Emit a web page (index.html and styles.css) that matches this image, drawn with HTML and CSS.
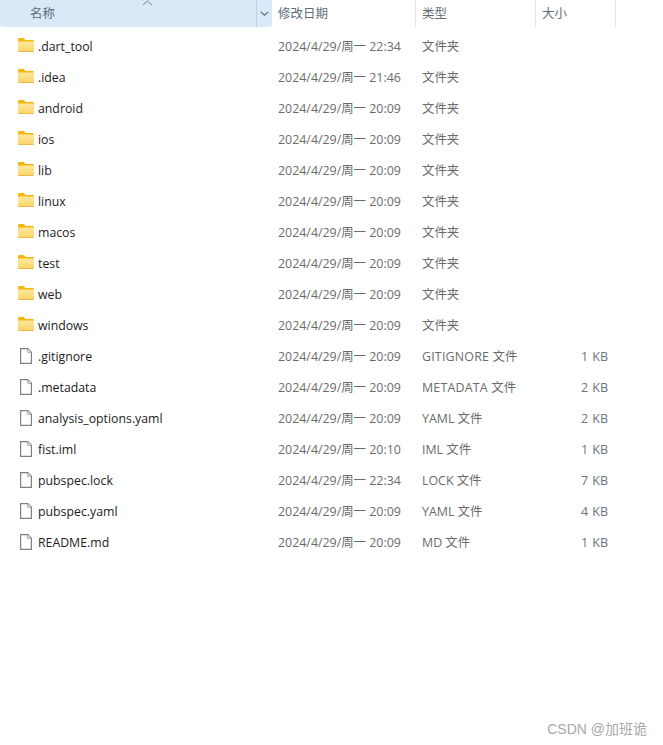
FILE: index.html
```html
<!DOCTYPE html>
<html lang="zh-CN">
<head>
  <meta charset="UTF-8">
  <title>fist</title>
  <link rel="stylesheet" href="styles.css">
</head>
<body>
  <svg class="defs" width="0" height="0">
    <defs>
      <linearGradient id="folderFront" x1="0" y1="0" x2="0" y2="1">
        <stop offset="0" stop-color="#fee89f"/>
        <stop offset="1" stop-color="#fcd56a"/>
      </linearGradient>
      <symbol id="folder" viewBox="0 0 16 14">
        <path d="M0 1.500C0 .7.6 0 1.400 0h3.800c.4 0 .7.1 1 .4L7.600 2H14.600c.8 0 1.400.6 1.400 1.400V4H0z" fill="#f6b40e"/>
        <path d="M0 3.400h16v8.900c0 .8-.6 1.400-1.400 1.400H1.400C.6 13.700 0 13.100 0 12.300z" fill="url(#folderFront)"/>
        <path d="M0 13h16v.2c0 .3-.6.5-1.400.5H1.400C.6 13.700 0 13.500 0 13.200z" fill="#e9aa2b"/>
      </symbol>
      <symbol id="file" viewBox="0 0 12 16">
        <path d="M.6.6h7.200l3.600 3.600v11.200H.6z" fill="#fff" stroke="#808080" stroke-width="1.200"/>
        <path d="M7.600 1v3.400H11" fill="#ececec" stroke="#b0b0b0"/>
      </symbol>
    </defs>
  </svg>

  <div class="list">
    <div class="head">
      <div class="head-name">
        <span class="sort-arrow"><svg width="11" height="6" viewBox="0 0 11 6"><path d="M1 5l4.500-4L10 5" fill="none" stroke="#7b8288"/></svg></span>
        <span class="head-label">名称</span>
        <span class="head-drop"><svg width="9" height="5" viewBox="0 0 9 5"><path d="M.8.8l3.700 3.400L8.200.8" fill="none" stroke="#5d6873" stroke-width="1.100"/></svg></span>
      </div>
      <div class="head-cell">修改日期</div>
      <div class="head-cell">类型</div>
      <div class="head-cell">大小</div>
    </div>

    <div class="row"><svg class="ico-folder"><use href="#folder"/></svg><span class="name">.dart_tool</span><span class="cell">2024/4/29/周一 22:34</span><span class="cell">文件夹</span><span class="size"></span></div>
    <div class="row"><svg class="ico-folder"><use href="#folder"/></svg><span class="name">.idea</span><span class="cell">2024/4/29/周一 21:46</span><span class="cell">文件夹</span><span class="size"></span></div>
    <div class="row"><svg class="ico-folder"><use href="#folder"/></svg><span class="name">android</span><span class="cell">2024/4/29/周一 20:09</span><span class="cell">文件夹</span><span class="size"></span></div>
    <div class="row"><svg class="ico-folder"><use href="#folder"/></svg><span class="name">ios</span><span class="cell">2024/4/29/周一 20:09</span><span class="cell">文件夹</span><span class="size"></span></div>
    <div class="row"><svg class="ico-folder"><use href="#folder"/></svg><span class="name">lib</span><span class="cell">2024/4/29/周一 20:09</span><span class="cell">文件夹</span><span class="size"></span></div>
    <div class="row"><svg class="ico-folder"><use href="#folder"/></svg><span class="name">linux</span><span class="cell">2024/4/29/周一 20:09</span><span class="cell">文件夹</span><span class="size"></span></div>
    <div class="row"><svg class="ico-folder"><use href="#folder"/></svg><span class="name">macos</span><span class="cell">2024/4/29/周一 20:09</span><span class="cell">文件夹</span><span class="size"></span></div>
    <div class="row"><svg class="ico-folder"><use href="#folder"/></svg><span class="name">test</span><span class="cell">2024/4/29/周一 20:09</span><span class="cell">文件夹</span><span class="size"></span></div>
    <div class="row"><svg class="ico-folder"><use href="#folder"/></svg><span class="name">web</span><span class="cell">2024/4/29/周一 20:09</span><span class="cell">文件夹</span><span class="size"></span></div>
    <div class="row"><svg class="ico-folder"><use href="#folder"/></svg><span class="name">windows</span><span class="cell">2024/4/29/周一 20:09</span><span class="cell">文件夹</span><span class="size"></span></div>
    <div class="row"><svg class="ico-file"><use href="#file"/></svg><span class="name">.gitignore</span><span class="cell">2024/4/29/周一 20:09</span><span class="cell wide">GITIGNORE 文件</span><span class="size">1 KB</span></div>
    <div class="row"><svg class="ico-file"><use href="#file"/></svg><span class="name">.metadata</span><span class="cell">2024/4/29/周一 20:09</span><span class="cell wide">METADATA 文件</span><span class="size">2 KB</span></div>
    <div class="row"><svg class="ico-file"><use href="#file"/></svg><span class="name">analysis_options.yaml</span><span class="cell">2024/4/29/周一 20:09</span><span class="cell">YAML 文件</span><span class="size">2 KB</span></div>
    <div class="row"><svg class="ico-file"><use href="#file"/></svg><span class="name">fist.iml</span><span class="cell">2024/4/29/周一 20:10</span><span class="cell">IML 文件</span><span class="size">1 KB</span></div>
    <div class="row"><svg class="ico-file"><use href="#file"/></svg><span class="name">pubspec.lock</span><span class="cell">2024/4/29/周一 22:34</span><span class="cell">LOCK 文件</span><span class="size">7 KB</span></div>
    <div class="row"><svg class="ico-file"><use href="#file"/></svg><span class="name">pubspec.yaml</span><span class="cell">2024/4/29/周一 20:09</span><span class="cell">YAML 文件</span><span class="size">4 KB</span></div>
    <div class="row"><svg class="ico-file"><use href="#file"/></svg><span class="name">README.md</span><span class="cell">2024/4/29/周一 20:09</span><span class="cell">MD 文件</span><span class="size">1 KB</span></div>
  </div>

  <div class="watermark">CSDN @加班诡</div>
</body>
</html>
```

FILE: styles.css
```css
* {
  box-sizing: border-box;
}

html, body {
  height: 100%;
}

body {
  margin: 0;
  background: #fff;
  overflow: hidden;
  font-family: "Open Sans", "Noto Sans CJK SC", sans-serif;
  font-size: 12.5px;
}

.defs {
  position: absolute;
}

.list {
  width: 616px;
}

.head {
  display: grid;
  grid-template-columns: 272px 144px 120px 80px;
  height: 27px;
  margin-bottom: 4px;
}

.head-name {
  position: relative;
  display: flex;
  background: #d9e9f8;
  border-radius: 0 0 3px 3px;
}

.head-label {
  flex: 1;
  padding-left: 30px;
  line-height: 27px;
  color: #5f6c7a;
}

.head-drop {
  width: 16px;
  display: flex;
  align-items: center;
  justify-content: center;
  border-left: 1px solid #bccfe0;
}

.sort-arrow {
  position: absolute;
  left: 142px;
  top: 0;
  line-height: 0;
}

.head-cell {
  padding-left: 6px;
  line-height: 27px;
  color: #5f6c7a;
  border-right: 1px solid #e5e5e5;
}

.row {
  display: grid;
  grid-template-columns: 18px 20px 234px 144px 120px 72px;
  align-items: center;
  height: 31px;
}

.ico-folder {
  grid-column: 1 / 3;
  margin-left: 18px;
  width: 16px;
  height: 14px;
  margin-top: -3px;
}

.ico-file {
  grid-column: 1 / 3;
  margin-left: 20px;
  width: 12px;
  height: 16px;
  margin-top: -1px;
}

.name {
  font-size: 12.3px;
  color: #1c1c1c;
}

.cell {
  padding-left: 6px;
  padding-bottom: 2px;
  font-size: 12.4px;
  color: #6b6b6b;
  white-space: nowrap;
}

.wide {
  letter-spacing: 0.2px;
}

.size {
  padding-bottom: 1px;
  text-align: right;
  word-spacing: 1px;
  color: #6b7480;
}

.watermark {
  position: absolute;
  right: 16px;
  bottom: 7px;
  font-family: "Liberation Sans", "Noto Sans CJK SC", sans-serif;
  font-size: 14px;
  color: #a8a8a8;
}
```
